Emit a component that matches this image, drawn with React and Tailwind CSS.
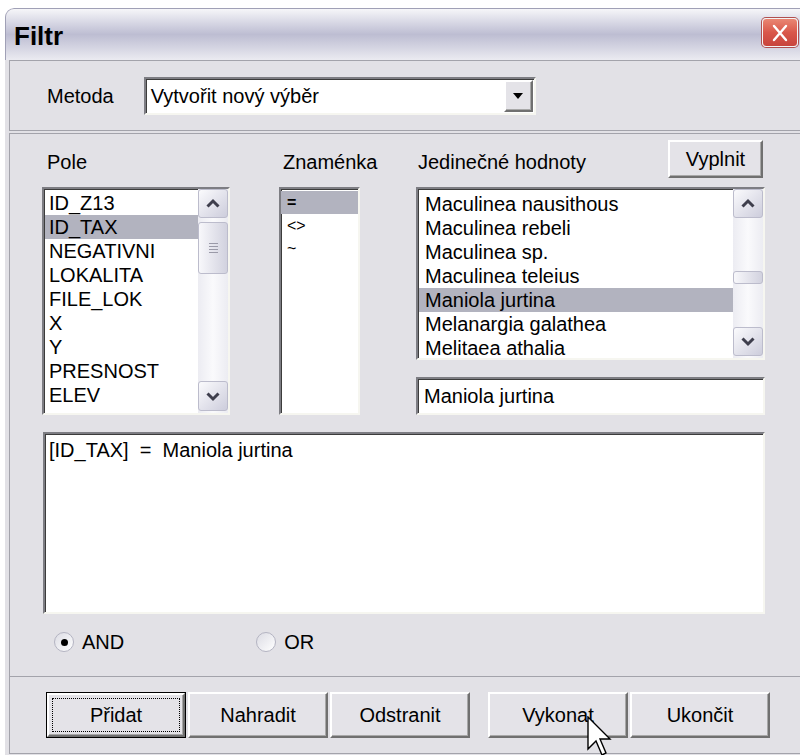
import React from "react";

// classic 3D edges used by the dialog controls
const sunken =
  "border-2 border-t-[#7d7d83] border-l-[#7d7d83] border-r-[#f6f6f0] border-b-[#f6f6f0] shadow-[inset_1px_1px_0_#3c3c3c]";
const raised =
  "border-2 border-t-white border-l-white border-r-[#707070] border-b-[#707070] shadow-[inset_-1px_-1px_0_#a8a8a8]";

const fields = ["ID_Z13", "ID_TAX", "NEGATIVNI", "LOKALITA", "FILE_LOK", "X", "Y", "PRESNOST", "ELEV"];
const signs = ["=", "<>", "~"];
const values = [
  "Maculinea nausithous",
  "Maculinea rebeli",
  "Maculinea sp.",
  "Maculinea teleius",
  "Maniola jurtina",
  "Melanargia galathea",
  "Melitaea athalia",
];

function Chevron({ down }) {
  return (
    <svg width="16" height="11" viewBox="0 0 16 11">
      <polyline
        points={down ? "2.5,2.5 8,8 13.5,2.5" : "2.5,8.5 8,3 13.5,8.5"}
        fill="none"
        stroke="#3e3e4c"
        strokeWidth="3"
      />
    </svg>
  );
}

function ScrollButton({ down, className }) {
  return (
    <div
      className={`flex items-center justify-center rounded-[3px] border border-[#bcbccc] bg-linear-to-br from-[#fbfbfd] to-[#cdcddc] ${className}`}
    >
      <Chevron down={down} />
    </div>
  );
}

function Grip() {
  return (
    <div className="flex flex-col gap-[2px]">
      <div className="w-[9px] h-[1px] bg-[#9a9aa8]" />
      <div className="w-[9px] h-[1px] bg-[#9a9aa8]" />
      <div className="w-[9px] h-[1px] bg-[#9a9aa8]" />
      <div className="w-[9px] h-[1px] bg-[#9a9aa8]" />
    </div>
  );
}

function ScrollBar({ upH, gap, thumb, downH, grip }) {
  return (
    <div className="w-[30px] shrink-0 flex flex-col pb-[2px] bg-linear-to-r from-[#ececf2] via-[#fafafc] to-[#ececf2]">
      <ScrollButton className={upH} />
      <div className={gap} />
      <div
        className={`${thumb} rounded-[3px] border border-[#bcbccc] bg-linear-to-r from-[#f8f8fb] to-[#d2d2df] flex items-center justify-center`}
      >
        {grip && <Grip />}
      </div>
      <div className="flex-1" />
      <ScrollButton down className={downH} />
    </div>
  );
}

function Button({ children, isDefault }) {
  if (isDefault) {
    return (
      <div className="w-[140px] h-[46px] border border-black flex">
        <div className={`flex-1 flex p-[3px] bg-[#e4e3e8] ${raised}`}>
          <div className="flex-1 border border-dotted border-black flex items-center justify-center">
            {children}
          </div>
        </div>
      </div>
    );
  }
  return (
    <div className={`w-[140px] h-[46px] flex items-center justify-center bg-[#e4e3e8] ${raised}`}>
      {children}
    </div>
  );
}

function Radio({ checked, label, className }) {
  return (
    <div className={`flex items-center gap-[8px] ${className}`}>
      <div className="w-[20px] h-[20px] rounded-full border border-[#b4b4c2] bg-linear-to-br from-[#dcdce4] to-white flex items-center justify-center">
        {checked && <div className="w-[7px] h-[7px] rounded-full bg-black" />}
      </div>
      <span>{label}</span>
    </div>
  );
}

export default function App() {
  return (
    <div className="relative w-[800px] h-[755px] overflow-hidden bg-white pt-[8px] pl-[5px] font-['Liberation_Sans',Arial,sans-serif] text-[20px] leading-[24px] text-black">
      <div className="h-[747px] flex flex-col rounded-tl-[9px] overflow-hidden bg-[#e2e1e6]">
        {/* title bar */}
        <div className="h-[52px] shrink-0 flex justify-between rounded-tl-[9px] border-t border-l border-[#a0a0b6] bg-linear-to-b from-[#f6f6f9] via-[#bdbdd2] to-[#ebebf1] pl-[8px] pr-[2px]">
          <span className="self-center mt-[2px] font-bold text-[26px]">Filtr</span>
          <div className="mt-[9px] w-[36px] h-[29px] rounded-[4px] border border-[#f4f4f4] bg-linear-to-b from-[#e98673] via-[#d9574a] to-[#c8453d] shadow-[0_0_0_1px_#b05050] flex items-center justify-center">
            <svg width="20" height="20" viewBox="0 0 20 20">
              <path d="M4 3 L16 17 M16 3 L4 17" stroke="white" strokeWidth="2.4" strokeLinecap="round" />
            </svg>
          </div>
        </div>

        <div className="flex-1 flex flex-col pl-[4px]">
          {/* method */}
          <div className="h-[71px] shrink-0 flex items-center border-t border-l border-b border-[#a3a3ab] pl-[37px]">
            <span>Metoda</span>
            <div className={`ml-[30px] w-[392px] h-[38px] flex items-center bg-white ${sunken}`}>
              <span className="flex-1 pl-[5px]">Vytvořit nový výběr</span>
              <div className={`w-[29px] h-[32px] mr-[1px] flex items-center justify-center bg-[#e4e3e8] ${raised}`}>
                <svg width="12" height="8" viewBox="0 0 12 8">
                  <path d="M1 1 H11 L6 7 Z" fill="black" />
                </svg>
              </div>
            </div>
          </div>

          {/* expression builder */}
          <div className="mt-[2px] h-[544px] shrink-0 border-t border-l border-b border-[#a3a3ab] pt-[6px] pl-[32px]">
            <div className="flex items-start">
              <div className="w-[188px] shrink-0">
                <div className="h-[38px] flex items-center">
                  <span className="pt-[6px] pl-[5px]">Pole</span>
                </div>
                <div className={`mt-[9px] h-[228px] flex bg-white ${sunken}`}>
                  <div className="flex-1 pt-[2px] pl-[1px] overflow-hidden">
                    {fields.map((f) => (
                      <div
                        key={f}
                        className={`h-[24px] pl-[4px] ${f === "ID_TAX" ? "bg-[#b2b3bf]" : ""}`}
                      >
                        {f}
                      </div>
                    ))}
                  </div>
                  <ScrollBar upH="h-[29px]" gap="h-[4px]" thumb="h-[52px]" downH="h-[30px]" grip />
                </div>
              </div>

              <div className="ml-[49px] w-[81px] shrink-0">
                <div className="h-[38px] flex items-center">
                  <span className="pt-[6px] pl-[4px] whitespace-nowrap">Znaménka</span>
                </div>
                <div className={`mt-[9px] h-[228px] bg-white pt-[2px] ${sunken}`}>
                  {signs.map((s) => (
                    <div
                      key={s}
                      className={`h-[23px] pl-[6px] text-[16px] leading-[23px] ${s === "=" ? "bg-[#b2b3bf] font-bold" : ""}`}
                    >
                      {s}
                    </div>
                  ))}
                </div>
              </div>

              <div className="ml-[56px] w-[349px] shrink-0">
                <div className="h-[38px] flex items-center justify-between">
                  <span className="pt-[6px] pl-[2px]">Jedinečné hodnoty</span>
                  <div className={`w-[95px] h-[38px] mr-[2px] flex items-center justify-center bg-[#e4e3e8] ${raised}`}>
                    Vyplnit
                  </div>
                </div>
                <div className={`mt-[9px] h-[173px] flex bg-white ${sunken}`}>
                  <div className="flex-1 pt-[3px] pl-[1px] overflow-hidden">
                    {values.map((v) => (
                      <div
                        key={v}
                        className={`h-[24px] shrink-0 pl-[6px] whitespace-nowrap ${v === "Maniola jurtina" ? "bg-[#b2b3bf]" : ""}`}
                      >
                        {v}
                      </div>
                    ))}
                  </div>
                  <ScrollBar upH="h-[29px]" gap="h-[53px]" thumb="h-[13px]" downH="h-[29px]" />
                </div>
                <div className={`mt-[17px] h-[38px] flex items-center bg-white pl-[6px] ${sunken}`}>
                  Maniola jurtina
                </div>
              </div>
            </div>

            <div className={`mt-[17px] ml-[1px] w-[722px] h-[182px] bg-white pt-[4px] pl-[4px] whitespace-pre ${sunken}`}>
              {"[ID_TAX]  =  Maniola jurtina"}
            </div>

            <div className="mt-[17px] h-[22px] flex items-center">
              <Radio checked label="AND" className="ml-[12px]" />
              <Radio label="OR" className="ml-[132px]" />
            </div>
          </div>

          {/* actions */}
          <div className="h-[77px] shrink-0 border-l border-b border-[#a3a3ab] pt-[15px] pl-[36px] flex items-start">
            <Button isDefault>Přidat</Button>
            <div className="ml-[2px]">
              <Button>Nahradit</Button>
            </div>
            <div className="ml-[2px]">
              <Button>Odstranit</Button>
            </div>
            <div className="ml-[18px]">
              <Button>Vykonat</Button>
            </div>
            <div className="ml-[2px]">
              <Button>Ukončit</Button>
            </div>
          </div>
        </div>
      </div>

      {/* mouse pointer */}
      <svg className="absolute left-[587px] top-[716px]" width="26" height="42" viewBox="0 0 13 21">
        <path
          d="M0.5 0.5 L0.5 16.5 L4.5 12.5 L7.5 19.5 L9.5 18.5 L6.5 11.5 L11.5 11.5 Z"
          fill="white"
          stroke="black"
          strokeWidth="0.7"
          strokeLinejoin="miter"
        />
      </svg>
    </div>
  );
}
